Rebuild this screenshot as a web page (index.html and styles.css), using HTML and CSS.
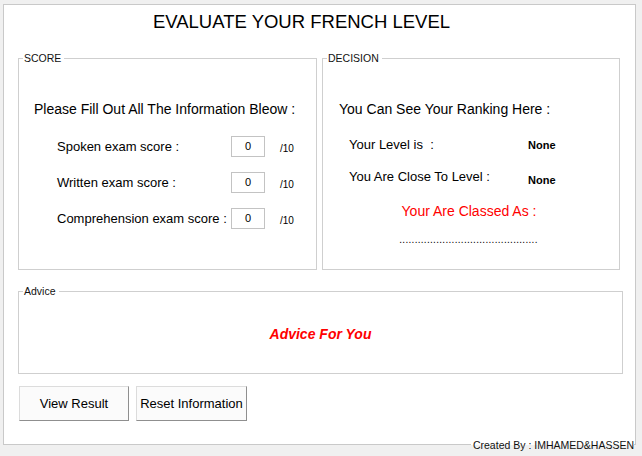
FILE: index.html
```html
<!DOCTYPE html>
<html>
<head>
<meta charset="utf-8">
<link rel="stylesheet" href="styles.css">
</head>
<body>
<div class="window">
<div class="panel">
  <h1 class="title">EVALUATE YOUR FRENCH LEVEL</h1>
  <div class="row">
    <fieldset class="group score">
      <legend>SCORE</legend>
      <p class="heading">Please Fill Out All The Information Bleow :</p>
      <div class="field">
        <span class="label">Spoken exam score :</span>
        <span class="box">0</span>
        <span class="max">/10</span>
      </div>
      <div class="field">
        <span class="label">Written exam score :</span>
        <span class="box">0</span>
        <span class="max">/10</span>
      </div>
      <div class="field">
        <span class="label">Comprehension exam score :</span>
        <span class="box">0</span>
        <span class="max">/10</span>
      </div>
    </fieldset>
    <fieldset class="group decision">
      <legend>DECISION</legend>
      <p class="heading">You Can See Your Ranking Here :</p>
      <div class="result">
        <span class="rlabel">Your Level is &nbsp;:</span>
        <span class="value">None</span>
      </div>
      <div class="result second">
        <span class="rlabel">You Are Close To Level :</span>
        <span class="value low">None</span>
      </div>
      <p class="classed">Your Are Classed As :</p>
      <p class="dots">.............................................</p>
    </fieldset>
  </div>
  <fieldset class="group advice">
    <legend>Advice</legend>
    <p class="advice-text">Advice For You</p>
  </fieldset>
  <div class="buttons">
    <button class="btn view">View Result</button>
    <button class="btn reset">Reset Information</button>
  </div>
  <span class="credit">Created By : IMHAMED&amp;HASSEN</span>
</div>
</div>
</body>
</html>
```
FILE: styles.css
```css
* { box-sizing: border-box; }
html, body {
  margin: 0;
  padding: 0;
  background: #f0f0f0;
  font-family: "Liberation Sans", Arial, sans-serif;
  color: #000;
}
.window {
  height: 456px;
  padding-top: 4px;
  padding-left: 3px;
}
.panel {
  position: relative;
  width: 633px;
  height: 441px;
  background: #fff;
  border: 1px solid #c9c9c9;
  padding: 0 14px;
}
.title {
  margin: 0 0 18px;
  padding-top: 5px;
  font-size: 18.5px;
  line-height: 24px;
  font-weight: normal;
  text-align: center;
  padding-right: 36px;
}
.row {
  display: grid;
  grid-template-columns: 299px 298px;
  column-gap: 5px;
}
.group {
  margin: 0;
  border: 1px solid #cfcfcf;
  padding: 0;
  min-width: 0;
}
.group legend {
  font-size: 10.5px;
  line-height: 12px;
  padding: 0 3px 0 1px;
  margin-left: 4px;
  color: #111;
}
.score, .decision {
  height: 218px;
}
.heading {
  margin: 0;
  padding-top: 36px;
  font-size: 14px;
  line-height: 18px;
}
.score .heading { padding-left: 15px; }
.decision .heading { padding-left: 16px; }
.field {
  display: flex;
  align-items: center;
  height: 21px;
  margin-top: 15px;
  padding-left: 38px;
  font-size: 13px;
}
.score .heading + .field { margin-top: 18px; }
.label { width: 174px; }
.box {
  width: 34px;
  height: 21px;
  border: 1px solid #c3c3c3;
  font-size: 11px;
  line-height: 19px;
  text-align: center;
}
.max {
  margin-left: 15px;
  font-size: 10px;
  padding-top: 3px;
}
.result {
  display: flex;
  align-items: center;
  height: 20px;
  margin-top: 16px;
  padding-left: 26px;
  font-size: 13px;
}
.result.second { margin-top: 12px; }
.rlabel { width: 179px; }
.value {
  font-weight: bold;
  font-size: 11px;
  padding-top: 1px;
}
.value.low { padding-top: 8px; }
.classed {
  margin: 15px 0 0;
  text-align: center;
  color: #f00;
  font-size: 14px;
  line-height: 20px;
  padding-right: 4px;
}
.dots {
  margin: 9px 0 0;
  text-align: center;
  font-size: 10px;
  line-height: 20px;
  padding-right: 5px;
  letter-spacing: 0.3px;
}
.advice {
  margin-top: 15px;
  width: 605px;
  height: 89px;
}
.advice-text {
  margin: 0;
  padding-top: 27px;
  text-align: center;
  color: #f00;
  font-weight: bold;
  font-style: italic;
  font-size: 14px;
  line-height: 20px;
}
.buttons {
  display: flex;
  gap: 7px;
  margin-top: 12px;
  padding-left: 1px;
}
.btn {
  height: 35px;
  background: #fbfbfb;
  border: 1px solid #dcdcdc;
  border-right-color: #8f8f8f;
  border-bottom-color: #8f8f8f;
  font-family: "Liberation Sans", Arial, sans-serif;
  font-size: 13px;
  color: #000;
  padding: 0;
}
.view { width: 110px; }
.reset { width: 111px; }
.credit {
  position: absolute;
  z-index: 1;
  right: 1px;
  bottom: -8px;
  font-size: 10.5px;
  line-height: 14px;
  padding-left: 2px;
  background: linear-gradient(#fff 0 7px, #f0f0f0 7px);
  color: #111;
  white-space: nowrap;
}
```
